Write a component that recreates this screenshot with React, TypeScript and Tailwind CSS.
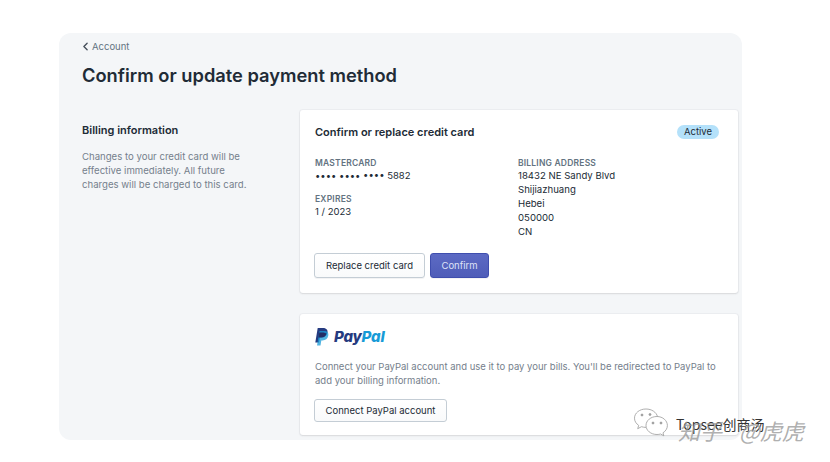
import { ChevronLeft } from 'lucide-react';

function Label({ children }: { children: string }) {
  return <div className="text-[8.5px] leading-[12px] font-semibold tracking-[0.2px] text-[#637381]">{children}</div>;
}

function WeChatMark() {
  return (
    <svg width="36" height="30" viewBox="0 0 36 30" fill="none" stroke="#9a9a9a" strokeWidth="0.8">
      <path d="M13 1C6.5 1 1.5 5 1.5 10.2c0 3 1.6 5.4 4.2 7.2l-1 3.3 3.8-2c1.4.4 2.8.7 4.5.7" fill="#fff" />
      <path d="M13 1c5.6 0 10.4 3.2 11.5 7.6" />
      <path d="M24 8.500c-6.200 0-11 4-11 9s4.800 9 11 9c1.300 0 2.500-.2 3.600-.5l3.200 1.800-.8-3c2.700-1.700 4.400-4.300 4.400-7.300 0-5-4.800-9-10.400-9z" fill="#fff" />
      <circle cx="9" cy="7" r="1" fill="#9a9a9a" />
      <circle cx="17" cy="6.500" r="1" fill="#9a9a9a" />
      <circle cx="20" cy="15" r="1" fill="#9a9a9a" />
      <circle cx="28" cy="15" r="1" fill="#9a9a9a" />
    </svg>
  );
}

export default function App() {
  return (
    <div className="relative w-[830px] h-[462px] overflow-hidden bg-white pt-[33px] pl-[59px] font-['Inter',sans-serif]">
      <div className="w-[683px] h-[407px] overflow-hidden rounded-[12px] bg-[#f4f6f8] pl-[23px] pr-1">
        {/* Breadcrumb and title */}
        <div className="flex items-center pt-[7px] text-[9.5px] leading-[12px] text-[#637381] translate-y-[1px]">
          <ChevronLeft className="w-[13px] h-[13px] -ml-[3px] -mt-[2px] text-[#454f5b]" strokeWidth={2.5} />
          <span>Account</span>
        </div>
        <h1 className="mt-[11px] text-[18.300px] leading-[24px] font-semibold text-[#212b36]">Confirm or update payment method</h1>

        <div className="mt-[23px] flex">
          {/* Left column */}
          <div className="w-[218px] shrink-0 pt-[13px]">
            <h2 className="text-[11px] leading-[14px] font-semibold text-[#212b36]">Billing information</h2>
            <p className="mt-[13px] w-[182px] text-[9.600px] leading-[14px] text-[#75808c]">
              Changes to your credit card will be effective immediately. All future charges will be charged to this card.
            </p>
          </div>

          {/* Cards */}
          <div className="w-[438px] flex flex-col gap-[21px]">
            <div className="h-[183px] rounded-[3px] bg-white px-[15px] pt-[15px] shadow-[0_0_0_1px_rgba(63,63,68,0.04),0_1px_2px_0_rgba(63,63,68,0.12)]">
              <div className="flex items-center justify-between">
                <h3 className="text-[11px] leading-[14px] font-semibold text-[#212b36]">Confirm or replace credit card</h3>
                <span className="mr-[4px] rounded-full bg-[#b4e1fa] px-[7px] text-[9.500px] leading-[14px] text-[#212b36]">Active</span>
              </div>

              <div className="mt-[18px] flex">
                <div className="w-[203px]">
                  <Label>MASTERCARD</Label>
                  <div className="text-[9.500px] leading-[14px] text-[#212b36]">•••• •••• •••• 5882</div>
                  <div className="mt-[10px]">
                    <Label>EXPIRES</Label>
                  </div>
                  <div className="text-[9.500px] leading-[14px] text-[#212b36]">1 / 2023</div>
                </div>
                <div>
                  <Label>BILLING ADDRESS</Label>
                  <div className="text-[9.600px] leading-[14px] text-[#212b36]">
                    <div>18432 NE Sandy Blvd</div>
                    <div>Shijiazhuang</div>
                    <div>Hebei</div>
                    <div>050000</div>
                    <div>CN</div>
                  </div>
                </div>
              </div>

              <div className="mt-[14px] -ml-px flex gap-[5px]">
                <button className="h-[25px] w-[111px] rounded-[3px] border border-[#c4cdd5] bg-gradient-to-b from-white to-[#f9fafb] pt-px text-[9.500px] text-[#212b36] shadow-[0_1px_0_0_rgba(22,29,37,0.05)]">
                  Replace credit card
                </button>
                <button className="h-[25px] w-[59px] rounded-[3px] border border-[#3f4eae] bg-gradient-to-b from-[#5c6ac4] to-[#4f5db8] pt-px text-[9.500px] text-[#dfe3f8] shadow-[0_1px_0_0_rgba(22,29,37,0.05)]">
                  Confirm
                </button>
              </div>
            </div>

            <div className="h-[121px] rounded-[3px] bg-white px-[15px] pt-[14px] shadow-[0_0_0_1px_rgba(63,63,68,0.04),0_1px_2px_0_rgba(63,63,68,0.12)]">
              <div className="flex items-center gap-[5px]">
                <svg width="15" height="18" viewBox="0 0 14 18" className="-ml-px">
                  <path d="M3.200 0h5.300c2.900 0 5 1.500 4.500 4.600-.6 3.400-2.900 5-5.900 5H5.300l-.8 4.800H.8L3.200 0z" fill="#253b80" />
                  <path d="M5 3h4.600c2.900 0 4.700 1.400 4.200 4.500-.6 3.400-2.800 4.900-5.700 4.900H6.800L6 17.500H2.500L5 3z" fill="#179bd7" fillOpacity="0.75" />
                  <path d="M4.800 4.500h4.300c1 .2 2 .5 2.800 1-.5 2.700-2.400 4.100-5.100 4.100H3.900l.9-5.100z" fill="#222d65" />
                </svg>
                <span className="text-[15px] leading-[18px] font-extrabold italic tracking-[-0.2px]">
                  <span className="text-[#253b80]">Pay</span>
                  <span className="text-[#179bd7]">Pal</span>
                </span>
              </div>
              <p className="mt-[14px] text-[9.500px] leading-[14px] text-[#75808c]">
                Connect your PayPal account and use it to pay your bills. You'll be redirected to PayPal to add your billing information.
              </p>
              <button className="mt-[11px] -ml-px h-[23px] w-[133px] rounded-[3px] border border-[#c4cdd5] bg-gradient-to-b from-white to-[#f9fafb] pt-[2px] text-[9.500px] text-[#212b36]">
                Connect PayPal account
              </button>
            </div>
          </div>
        </div>
      </div>

      {/* Watermark */}
      <div className="absolute left-[633px] top-[408px]">
        <WeChatMark />
      </div>
      <div className="absolute left-[676px] top-[415px] text-[14px] leading-[18px] text-[#333] font-['Noto_Sans_CJK_SC',sans-serif]">Topsee创商汤</div>
      <div className="absolute left-[678px] top-[416px] text-[22px] leading-[28px] italic [word-spacing:12px] text-[#9a9a9a]/80 font-['Noto_Sans_CJK_SC',sans-serif]">知乎 @虎虎</div>
    </div>
  );
}
